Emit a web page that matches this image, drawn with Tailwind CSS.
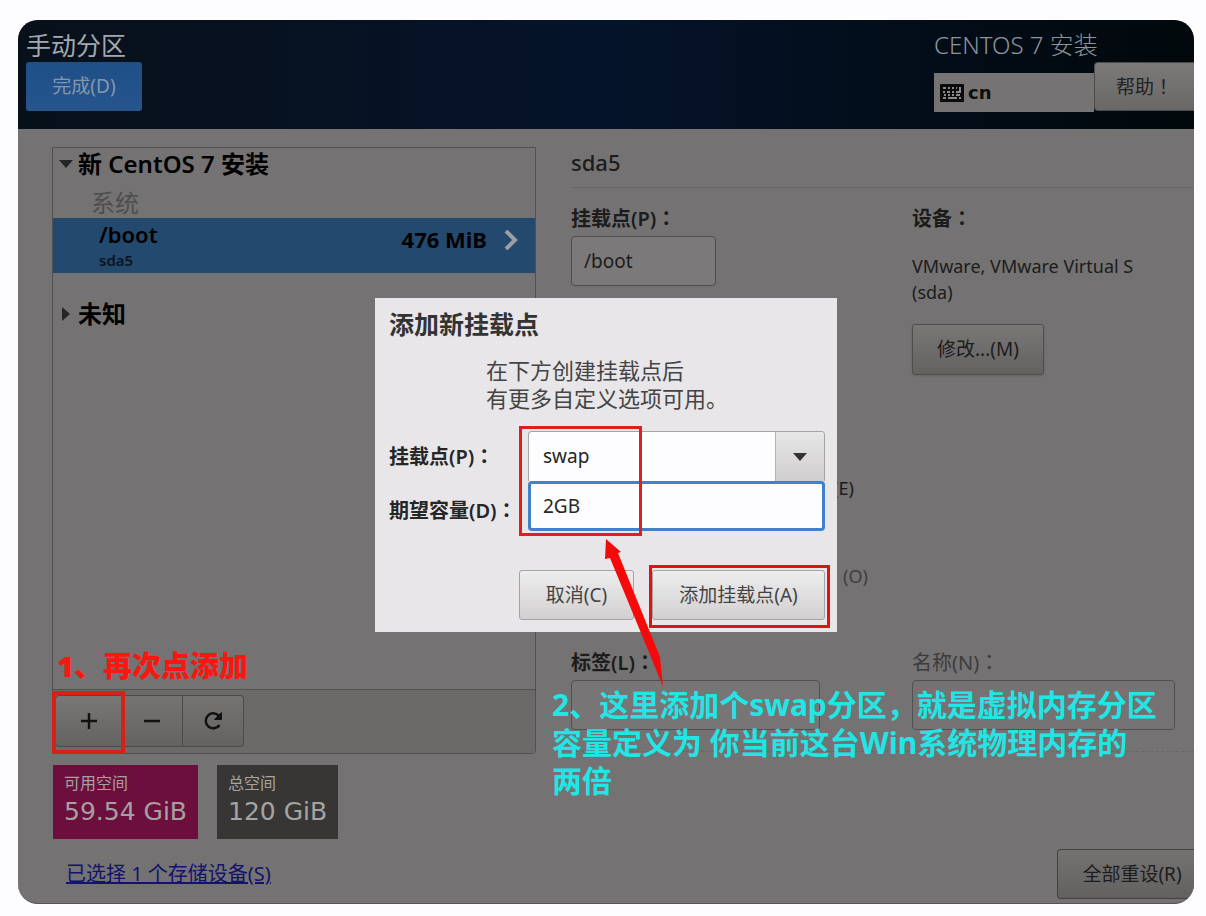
<!DOCTYPE html>
<html lang="zh-CN">
<head>
    <meta charset="UTF-8">
    <meta name="viewport" content="width=device-width, initial-scale=1.0">
    <title>CentOS 7 安装 - 手动分区</title>
    <script src="https://cdn.jsdelivr.net/npm/@tailwindcss/browser@4"></script>
</head>
<body class="bg-[#fdfcfe] pt-5 pb-3 pl-[18px] pr-3 font-['Noto_Sans','Noto_Sans_CJK_SC',sans-serif] text-[#1c1c1c]">
    <div class="relative overflow-hidden rounded-[20px] bg-[#747272] border-b border-[#555555]">

        <!-- header -->
        <header class="flex justify-between h-[109px] pl-2 bg-linear-to-r from-[#08101a] via-[#05132a] to-[#02080b]">
            <div class="pt-2">
                <h1 class="text-[25px] leading-[34px] text-[#a3a8b0]">手动分区</h1>
                <button class="block w-[116px] h-[49px] rounded-[3px] bg-linear-to-b from-[#1f4f87] to-[#25558c] text-[19px] text-[#8597ac]">完成(D)</button>
            </div>
            <div class="w-[260px] pt-2">
                <p class="text-2xl leading-[34px] font-light text-[#8f959c]">CENTOS 7 安装</p>
                <div class="flex items-start">
                    <div class="flex items-center gap-1 w-[160px] h-[39px] mt-[11px] pl-[6px] bg-[#757373]">
                        <svg class="w-6 h-[18px]" viewBox="0 0 24 18">
                            <rect width="24" height="18" rx="1" fill="#0b0b0b"/>
                            <g stroke="#8a8888" stroke-width="2" fill="none">
                                <path d="M3 4h3M8 4h2M12 4h2M16 4h1M19 4h2"/>
                                <path d="M3 8h2M7 8h3M12 8h2M16 8h4M20 5v4"/>
                                <path d="M4 11h2M8 11h2M12 11h2M16 11h4"/>
                                <path d="M3 14h3M8 14h9M19 14h2"/>
                            </g>
                        </svg>
                        <span class="text-lg leading-none font-bold text-[#0e0e0e] font-['DejaVu_Sans',sans-serif]">cn</span>
                    </div>
                    <button class="w-[100px] h-[49px] rounded-l border border-r-0 border-[#4c4b4a] bg-linear-to-b from-[#7c7a79] to-[#6a6867] text-[19px] text-[#222222]">帮助<span lang="zh-TW" class="font-['Noto_Sans_CJK_TC',sans-serif]">！</span></button>
                </div>
            </div>
        </header>

        <main class="flex h-[774px] pl-[34px] pt-[18px]">
            <!-- mount point list -->
            <section class="w-[484px] shrink-0">
                <div class="flex flex-col h-[607px] border border-[#525151] rounded-b">
                    <div class="flex items-center gap-[5px] h-8 pl-[6px] text-2xl font-semibold text-black">
                        <svg class="w-[14px] h-2" viewBox="0 0 14 8"><path d="M0 0h14L7 8z" fill="#252525"/></svg>
                        <span>新 CentOS 7 安装</span>
                    </div>
                    <p class="h-[38px] leading-[46px] pl-[38px] text-2xl text-[#4f4e4e]">系统</p>
                    <div class="flex items-center justify-between h-[55px] pb-[2px] pl-[46px] pr-4 bg-[#24496f] text-black">
                        <div>
                            <p class="text-[22px] leading-[30px] font-semibold">/boot</p>
                            <p class="text-[15px] leading-[22px] font-semibold text-[#0a1420]">sda5</p>
                        </div>
                        <div class="flex items-center gap-4 pb-[10px]">
                            <span class="text-[22px] font-bold">476 MiB</span>
                            <svg class="w-4 h-5" viewBox="0 0 16 20" fill="none" stroke="#9b9ea3" stroke-width="4"><path d="M3 1l9 9-9 9"/></svg>
                        </div>
                    </div>
                    <div class="flex items-center gap-2 h-[82px] pl-[9px] text-2xl font-bold text-black">
                        <svg class="w-2 h-[14px]" viewBox="0 0 8 14"><path d="M0 0v14l8-7z" fill="#252525"/></svg>
                        <span>未知</span>
                    </div>
                    <div class="relative flex mt-auto h-16 pl-[2px] pt-[5px] border-t border-[#525151] bg-[#6c6a69] rounded-b">
                        <button aria-label="添加" class="flex items-center justify-center w-[67px] h-[52px] border border-[#4c4b4a] rounded-l bg-linear-to-b from-[#7a7877] to-[#656362]">
                            <svg class="w-4 h-4" viewBox="0 0 16 16" stroke="#111111" stroke-width="2.500"><path d="M0 8h16M8 0v16"/></svg>
                        </button>
                        <button aria-label="删除" class="flex items-center justify-center w-[61px] h-[52px] border-y border-r border-[#4c4b4a] bg-linear-to-b from-[#767473] to-[#656362]">
                            <svg class="w-4 h-4" viewBox="0 0 16 16" stroke="#111111" stroke-width="2.500"><path d="M0 8h16"/></svg>
                        </button>
                        <button aria-label="重新载入" class="flex items-center justify-center w-[61px] h-[52px] border-y border-r border-[#4c4b4a] rounded-r bg-linear-to-b from-[#767473] to-[#656362]">
                            <svg class="w-5 h-5" viewBox="0 0 20 20" fill="none" stroke="#111111" stroke-width="2.500"><path d="M16.500 14a7.500 7.500 0 1 1-1-9.500"/><path d="M18.500 1.500v7h-7l3-3z" fill="#111111" stroke-width="1"/></svg>
                        </button>
                        <div class="absolute -left-px top-px w-[73px] h-[63px] border-4 border-[#d82018]"></div>
                        <p class="absolute left-1 -top-[44px] text-[29px] leading-[40px] font-black text-[#fb1710] whitespace-nowrap">1、再次点添加</p>
                    </div>
                </div>

                <div class="flex gap-[19px] mt-[11px] pl-px font-['DejaVu_Sans','Noto_Sans_CJK_SC',sans-serif]">
                    <div class="h-[74px] px-[11px] pt-2 bg-[#6d0f3d] text-[#a5a0a3]">
                        <p class="text-base leading-[22px]">可用空间</p>
                        <p class="text-[25px] leading-[34px]">59.54 GiB</p>
                    </div>
                    <div class="h-[74px] px-[11px] pt-2 bg-[#373635] text-[#a5a4a3]">
                        <p class="text-base leading-[22px]">总空间</p>
                        <p class="text-[25px] leading-[34px]">120 GiB</p>
                    </div>
                </div>
                <a href="#" class="inline-block mt-[21px] ml-[14px] text-xl underline text-[#11136c]">已选择 1 个存储设备(S)</a>
            </section>

            <!-- details of the selected mount point -->
            <section class="flex flex-1 flex-col ml-[35px]">
                <h2 class="h-[41px] leading-[30px] text-[22px] font-medium border-b border-[#696766]">sda5</h2>
                <div class="grid grid-cols-[341px_1fr] h-[280px] pt-[17px]">
                    <div>
                        <label for="mount" class="block text-xl leading-[26px] font-semibold">挂载点(P)<span lang="zh-TW" class="font-['Noto_Sans_CJK_TC',sans-serif]">：</span></label>
                        <input id="mount" type="text" value="/boot" class="block mt-1 w-[145px] h-[50px] px-3 text-[19px] rounded border border-[#4f4e4e] bg-[#7b7979]">
                    </div>
                    <div>
                        <p class="text-xl leading-[26px] font-semibold">设备<span lang="zh-TW" class="font-['Noto_Sans_CJK_TC',sans-serif]">：</span></p>
                        <p class="mt-[21px] text-lg leading-[26px]">VMware, VMware Virtual S<br>(sda)</p>
                        <button class="block mt-[19px] w-[132px] h-[51px] rounded-[3px] border border-[#4f4e4d] bg-linear-to-b from-[#7a7877] to-[#646261] shadow-sm text-[19px]">修改...(M)</button>
                    </div>
                </div>
                <div class="h-[181px] pl-[262px] text-lg">
                    <p class="mt-[7px] leading-[26px]">(E)</p>
                    <p class="mt-[62px] pl-[10px] leading-[26px] text-[#3f3e3e]">(O)</p>
                </div>
                <div class="grid grid-cols-[341px_1fr] h-[103px] border-b border-dashed border-[#696766]">
                    <div>
                        <label for="label" class="block text-xl leading-[26px] font-semibold">标签(L)<span lang="zh-TW" class="font-['Noto_Sans_CJK_TC',sans-serif]">：</span></label>
                        <input id="label" type="text" class="block mt-1 w-[249px] h-[50px] px-3 text-[19px] rounded border border-[#525151] bg-[#777575]">
                    </div>
                    <div>
                        <label for="name" class="block text-xl leading-[26px] text-[#3d3c3c]">名称(N)<span lang="zh-TW" class="font-['Noto_Sans_CJK_TC',sans-serif]">：</span></label>
                        <input id="name" type="text" disabled class="block mt-1 w-[263px] h-[50px] px-3 text-[19px] rounded border border-[#525151]">
                    </div>
                </div>
                <button class="w-[137px] h-[50px] mt-auto mb-1 ml-auto pl-3 rounded-l border border-r-0 border-[#434242] bg-linear-to-b from-[#757372] to-[#636160] text-[19px] whitespace-nowrap">全部重设(R)</button>
            </section>
        </main>

        <!-- add mount point dialog -->
        <div role="dialog" aria-labelledby="dialog-title" class="absolute left-1/2 top-[278px] -translate-x-1/2 w-[462px] h-[334px] pl-[14px] pr-3 pt-[11px] bg-[#e8e6e8] text-[#262626]">
            <h2 id="dialog-title" class="text-[25px] leading-[30px] font-bold text-[#333333]">添加新挂载点</h2>
            <p class="mt-[17px] pl-[97px] text-[22px] leading-[28px] text-[#444444]">在下方创建挂载点后<br>有更多自定义选项可用。</p>
            <div class="flex items-center mt-[19px]">
                <label for="new-mount" class="w-[139px] text-xl font-semibold whitespace-nowrap">挂载点(P)<span lang="zh-TW" class="font-['Noto_Sans_CJK_TC',sans-serif]">：</span></label>
                <div class="flex flex-1 h-[50px] rounded-t border border-b-0 border-[#a5a3a5] bg-[#fdfcfe] overflow-hidden">
                    <input id="new-mount" type="text" value="swap" class="flex-1 min-w-0 pl-[14px] text-[19px]">
                    <button aria-label="展开" class="flex items-center justify-center w-[49px] border-l border-[#b4b2b3] bg-linear-to-b from-[#e8e7e8] to-[#cfcdce]">
                        <svg class="w-[14px] h-2" viewBox="0 0 14 8"><path d="M0 0h14L7 8z" fill="#333333"/></svg>
                    </button>
                </div>
            </div>
            <div class="flex items-center">
                <label for="capacity" class="w-[139px] pt-2 text-xl font-semibold whitespace-nowrap">期望容量(D)<span lang="zh-TW" class="font-['Noto_Sans_CJK_TC',sans-serif]">：</span></label>
                <input id="capacity" type="text" value="2GB" class="flex-1 min-w-0 h-[50px] pl-3 text-[19px] rounded border-3 border-[#3f82cb] bg-[#fdfcfe]">
            </div>
            <div class="flex justify-end gap-[18px] mt-[39px] text-[19px] text-[#444444]">
                <button class="w-[115px] h-[50px] rounded-[3px] border border-[#a5a3a3] bg-linear-to-b from-[#eeedee] to-[#d2d0d1]">取消(C)</button>
                <button class="w-[173px] h-[50px] rounded-[3px] border border-[#a5a3a3] bg-linear-to-b from-[#eeedee] to-[#d2d0d1] whitespace-nowrap">添加挂载点(A)</button>
            </div>

            <!-- annotations -->
            <div class="absolute left-[144px] top-[128px] w-[123px] h-[110px] border-3 border-[#dc2020]"></div>
            <div class="absolute left-[274px] top-[267px] w-[181px] h-[63px] border-3 border-[#dc1414]"></div>
            <svg class="absolute left-[221px] top-[236px] w-[80px] h-[160px]" viewBox="0 0 80 160"><path d="M10 5l15 13-3 1 42 104 3 30-10-25L14 24l-5 1z" fill="#f50a0a"/></svg>
            <p class="absolute left-[177px] top-[388px] text-[30px] leading-[38px] font-bold text-[#22e5e5] whitespace-nowrap">2、这里添加个swap分区，就是虚拟内存分区<br>容量定义为 你当前这台Win系统物理内存的<br>两倍</p>
        </div>
    </div>
</body>
</html>
